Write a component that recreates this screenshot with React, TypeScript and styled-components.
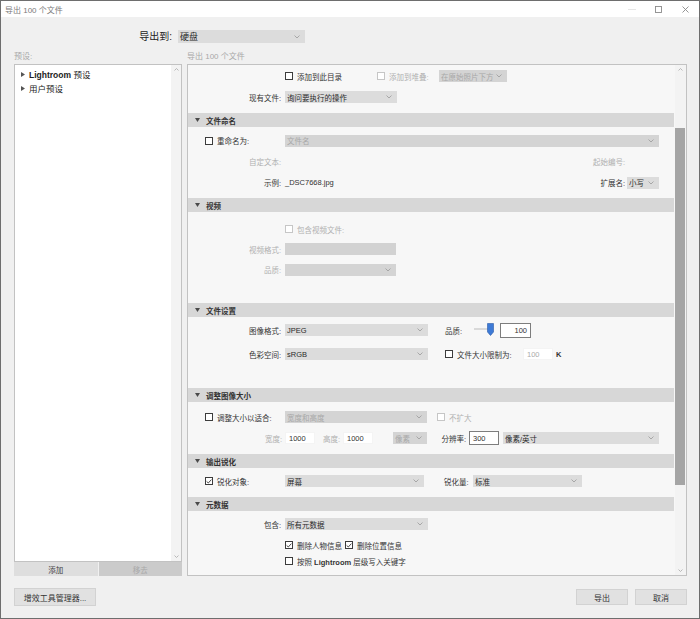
import React from "react";
import styled, { createGlobalStyle } from "styled-components";

const GlobalStyle = createGlobalStyle`
  html, body { margin: 0; padding: 0; background: #f0f0f0; }
  body { font-family: "Liberation Sans", "Noto Sans CJK SC", sans-serif; }
  * { box-sizing: border-box; }
`;

const Window = styled.div`
  width: 700px;
  height: 619px;
  border: 1px solid #6e6e6e;
  background: #f0f0f0;
  display: flex;
  flex-direction: column;
  font-size: 7.5px;
  color: #333;
  font-family: "Liberation Sans", "Noto Sans CJK SC", sans-serif;
  overflow: hidden;
`;

const TitleBar = styled.div`
  height: 16px;
  flex-shrink: 0;
  background: #fff;
  display: flex;
  align-items: center;
  padding-left: 4px;
  color: #7a7a7a;
  font-size: 8px;
`;

const WinControls = styled.div`
  margin-left: auto;
  display: flex;
  height: 100%;
`;

const WinBtn = styled.div`
  width: 27px;
  height: 100%;
  display: flex;
  align-items: center;
  justify-content: center;
`;

const Body = styled.div`
  flex: 1;
  display: flex;
  flex-direction: column;
  padding: 0 12px 0 13px;
`;

const DestRow = styled.div`
  height: 33px;
  padding-top: 13px;
  display: flex;
  align-items: flex-start;
  flex-shrink: 0;
`;

const DestLabel = styled.div`
  width: 158px;
  text-align: right;
  font-size: 10px;
  line-height: 13px;
  color: #222;
`;

const Main = styled.div`
  display: flex;
  gap: 5px;
  height: 526px;
  flex-shrink: 0;
`;

const Column = styled.div<{ $w: number }>`
  width: ${(p) => p.$w}px;
  display: flex;
  flex-direction: column;
  flex-shrink: 0;
`;

const ColHeading = styled.div`
  height: 14px;
  line-height: 14px;
  color: #a8a8a8;
  font-size: 8px;
`;

const ListBox = styled.div`
  height: 498px;
  border: 1px solid #c2c2c2;
  background: #fff;
  display: flex;
`;

const ListItems = styled.div`
  flex: 1;
  padding: 2px 0 0 6px;
`;

const TreeItem = styled.div`
  height: 14px;
  display: flex;
  align-items: center;
  gap: 4px;
  color: #222;
  font-size: 8.5px;
`;

const Latin = styled.span<{ $bold?: boolean }>`
  font-family: "Liberation Sans", sans-serif;
  font-weight: ${(p) => (p.$bold ? 700 : 400)};
`;

const ScrollBar = styled.div<{ $w: number }>`
  width: ${(p) => p.$w}px;
  background: #f3f3f3;
  display: flex;
  flex-direction: column;
  align-items: center;
  justify-content: space-between;
  padding: 3px 0 3px;
  flex-shrink: 0;
`;

const ScrollTrack = styled.div`
  flex: 1;
  width: 100%;
  padding: 57px 1px 84px 0;
  display: flex;
`;

const Thumb = styled.div`
  flex: 1;
  background: #a5a5a5;
`;

const ListButtons = styled.div`
  display: grid;
  grid-template-columns: 1fr 1fr;
  gap: 1px;
  height: 14px;
`;

const ListButton = styled.div<{ $dis?: boolean }>`
  background: ${(p) => (p.$dis ? "#cbcbcb" : "#dedede")};
  color: ${(p) => (p.$dis ? "#a9a9a9" : "#444")};
  display: flex;
  align-items: center;
  justify-content: center;
`;

const Panel = styled.div`
  height: 512px;
  border: 1px solid #c2c2c2;
  background: #f7f7f7;
  display: flex;
`;

const PanelContent = styled.div`
  flex: 1;
  overflow: hidden;
  display: flex;
  flex-direction: column;
`;

const SectionHeader = styled.div`
  height: 14px;
  flex-shrink: 0;
  background: #d7d7d7;
  display: flex;
  align-items: center;
  gap: 6px;
  padding-left: 7px;
  margin-right: 1px;
  font-weight: 700;
  color: #333;
`;

const SectionBody = styled.div<{ $h: number; $pt: number }>`
  height: ${(p) => p.$h}px;
  padding-top: ${(p) => p.$pt}px;
  flex-shrink: 0;
  overflow: hidden;
`;

const Row = styled.div<{ $h: number; $pl?: number; $pr?: number }>`
  height: ${(p) => p.$h}px;
  padding-left: ${(p) => p.$pl ?? 0}px;
  padding-right: ${(p) => p.$pr ?? 0}px;
  display: flex;
  align-items: center;
  white-space: nowrap;
`;

const Label = styled.div<{ $w: number; $dim?: boolean; $pr?: number }>`
  width: ${(p) => p.$w}px;
  padding-right: ${(p) => p.$pr ?? 0}px;
  flex-shrink: 0;
  text-align: right;
  color: ${(p) => (p.$dim ? "#b0b0b0" : "#333")};
`;

const Text = styled.span<{ $ml?: number; $dim?: boolean }>`
  margin-left: ${(p) => p.$ml ?? 0}px;
  color: ${(p) => (p.$dim ? "#b0b0b0" : "#333")};
`;

const Cell = styled.div<{ $w: number; $ml?: number }>`
  width: ${(p) => p.$w}px;
  margin-left: ${(p) => p.$ml ?? 0}px;
  flex-shrink: 0;
  display: flex;
  align-items: center;
`;

const Spacer = styled.div`
  flex: 1;
`;

const SelectBox = styled.div<{ $w: number; $ml?: number; $dis?: boolean; $h?: number; $fs?: number }>`
  width: ${(p) => p.$w}px;
  margin-left: ${(p) => p.$ml ?? 0}px;
  height: ${(p) => p.$h ?? 12}px;
  flex-shrink: 0;
  background: ${(p) => (p.$dis ? "#d4d4d4" : "#dcdcdc")};
  color: ${(p) => (p.$dis ? "#a8a8a8" : "#2a2a2a")};
  font-size: ${(p) => p.$fs ?? 7.5}px;
  display: flex;
  align-items: center;
  justify-content: space-between;
  padding: 0 5px 0 2px;
  white-space: nowrap;
  overflow: hidden;
`;

const Field = styled.div<{ $w: number; $ml?: number; $h?: number; $border?: boolean; $dis?: boolean; $right?: boolean }>`
  width: ${(p) => p.$w}px;
  margin-left: ${(p) => p.$ml ?? 0}px;
  height: ${(p) => p.$h ?? 12}px;
  flex-shrink: 0;
  background: #fff;
  border: 1px solid ${(p) => (p.$border ? "#7d7d7d" : "#f4f4f4")};
  color: ${(p) => (p.$dis ? "#aaaaaa" : "#333")};
  display: flex;
  align-items: center;
  justify-content: ${(p) => (p.$right ? "flex-end" : "flex-start")};
  padding: 0 3px;
`;

const BlankField = styled.div<{ $w: number; $ml?: number }>`
  width: ${(p) => p.$w}px;
  margin-left: ${(p) => p.$ml ?? 0}px;
  height: 12px;
  flex-shrink: 0;
  background: #d2d2d2;
`;

const CheckWrap = styled.span<{ $dis?: boolean }>`
  display: inline-flex;
  align-items: center;
  gap: 4px;
  color: ${(p) => (p.$dis ? "#b0b0b0" : "#333")};
  white-space: nowrap;
`;

const CheckBoxSq = styled.span<{ $dis?: boolean }>`
  width: 8px;
  height: 8px;
  flex-shrink: 0;
  border: 1px solid ${(p) => (p.$dis ? "#c6c6c6" : "#3c3c3c")};
  background: #fff;
  display: inline-flex;
  align-items: center;
  justify-content: center;
`;

const Footer = styled.div`
  flex: 1;
  display: flex;
  justify-content: space-between;
  align-items: flex-start;
  padding-top: 12px;
`;

const DlgButton = styled.div<{ $w: number; $h?: number }>`
  width: ${(p) => p.$w}px;
  height: ${(p) => p.$h ?? 16}px;
  background: #e1e1e1;
  border: 1px solid #d2d2d2;
  color: #333;
  display: flex;
  align-items: center;
  justify-content: center;
  font-size: 8px;
`;

const ButtonGroup = styled.div`
  display: flex;
  gap: 7px;
  padding-top: 1px;
`;

const Chevron = () => (
  <svg width="6" height="4" viewBox="0 0 6 4">
    <polyline points="0.5,0.5 3,3 5.5,0.5" fill="none" stroke="#a0a0a0" strokeWidth="0.9" />
  </svg>
);

const UpArrow = () => (
  <svg width="5" height="3" viewBox="0 0 5 3">
    <polyline points="0.5,2.5 2.5,0.5 4.5,2.5" fill="none" stroke="#a8a8a8" strokeWidth="0.8" />
  </svg>
);

const DownArrow = () => (
  <svg width="5" height="3" viewBox="0 0 5 3">
    <polyline points="0.5,0.5 2.5,2.5 4.5,0.5" fill="none" stroke="#a8a8a8" strokeWidth="0.8" />
  </svg>
);

const DownTri = () => (
  <svg width="5" height="4" viewBox="0 0 5 4">
    <polygon points="0,0 5,0 2.5,4" fill="#4a4a4a" />
  </svg>
);

const RightTri = () => (
  <svg width="4" height="5" viewBox="0 0 4 5">
    <polygon points="0,0 4,2.5 0,5" fill="#555" />
  </svg>
);

type SelectProps = { w: number; ml?: number; dis?: boolean; h?: number; fs?: number; children?: React.ReactNode };
const Select = ({ w, ml, dis, h, fs, children }: SelectProps) => (
  <SelectBox $w={w} $ml={ml} $dis={dis} $h={h} $fs={fs}>
    <span>{children}</span>
    <Chevron />
  </SelectBox>
);

type CheckProps = { checked?: boolean; dis?: boolean; children?: React.ReactNode };
const Check = ({ checked, dis, children }: CheckProps) => (
  <CheckWrap $dis={dis}>
    <CheckBoxSq $dis={dis}>
      {checked && (
        <svg width="6" height="5" viewBox="0 0 6 5">
          <polyline points="0.6,2.4 2.3,4 5.4,0.6" fill="none" stroke="#333" strokeWidth="0.9" />
        </svg>
      )}
    </CheckBoxSq>
    <span>{children}</span>
  </CheckWrap>
);

const Section = ({ title }: { title: string }) => (
  <SectionHeader>
    <DownTri />
    <span>{title}</span>
  </SectionHeader>
);

const QualitySlider = () => (
  <svg width="20" height="14" viewBox="0 0 20 14">
    <line x1="0" y1="6" x2="14" y2="6" stroke="#c4c4c4" strokeWidth="1.2" />
    <path d="M13.5,0.5 H19.5 V9 L16.5,12.5 L13.5,9 Z" fill="#3d7ad6" stroke="#2a5aa8" strokeWidth="0.6" />
  </svg>
);

export default function App() {
  return (
    <>
      <GlobalStyle />
      <Window>
        <TitleBar>
          <span>导出 100 个文件</span>
          <WinControls>
            <WinBtn>
              <svg width="8" height="1" viewBox="0 0 8 1">
                <line x1="0" y1="0.5" x2="8" y2="0.5" stroke="#e6e6e6" strokeWidth="1" />
              </svg>
            </WinBtn>
            <WinBtn>
              <svg width="7" height="7" viewBox="0 0 7 7">
                <rect x="0.5" y="0.5" width="6" height="6" fill="none" stroke="#8a8a8a" strokeWidth="0.9" />
              </svg>
            </WinBtn>
            <WinBtn>
              <svg width="7" height="7" viewBox="0 0 7 7">
                <path d="M0.5,0.5 L6.5,6.5 M6.5,0.5 L0.5,6.5" stroke="#8a8a8a" strokeWidth="0.9" />
              </svg>
            </WinBtn>
          </WinControls>
        </TitleBar>
        <Body>
          <DestRow>
            <DestLabel>导出到:</DestLabel>
            <Select w={127} ml={6} h={13} fs={9}>硬盘</Select>
          </DestRow>
          <Main>
            <Column $w={168}>
              <ColHeading>预设:</ColHeading>
              <ListBox>
                <ListItems>
                  <TreeItem>
                    <RightTri />
                    <span>
                      <Latin $bold>Lightroom</Latin> 预设
                    </span>
                  </TreeItem>
                  <TreeItem>
                    <RightTri />
                    <span>用户预设</span>
                  </TreeItem>
                </ListItems>
                <ScrollBar $w={10}>
                  <UpArrow />
                  <DownArrow />
                </ScrollBar>
              </ListBox>
              <ListButtons>
                <ListButton>添加</ListButton>
                <ListButton $dis>移去</ListButton>
              </ListButtons>
            </Column>
            <Column $w={500}>
              <ColHeading>导出 100 个文件</ColHeading>
              <Panel>
                <PanelContent>
                  <SectionBody $h={48} $pt={0}>
                    <Row $h={22} $pl={97}>
                      <Cell $w={92}>
                        <Check>添加到此目录</Check>
                      </Cell>
                      <Cell $w={62}>
                        <Check dis>添加到堆叠:</Check>
                      </Cell>
                      <Select w={68} dis>在原始照片下方</Select>
                    </Row>
                    <Row $h={20}>
                      <Label $w={93}>现有文件:</Label>
                      <Select w={112} ml={4}>询问要执行的操作</Select>
                    </Row>
                  </SectionBody>

                  <Section title="文件命名" />
                  <SectionBody $h={71} $pt={3}>
                    <Row $h={21} $pl={17}>
                      <Cell $w={80}>
                        <Check>重命名为:</Check>
                      </Cell>
                      <Select w={374} dis>文件名</Select>
                    </Row>
                    <Row $h={21} $pr={50}>
                      <Label $w={93} $dim>自定文本:</Label>
                      <Spacer />
                      <Text $dim>起始编号:</Text>
                    </Row>
                    <Row $h={21} $pr={16}>
                      <Label $w={93}>示例:</Label>
                      <Text $ml={4}>
                        <Latin>_DSC7668.jpg</Latin>
                      </Text>
                      <Spacer />
                      <Text>扩展名:</Text>
                      <Select w={32} ml={2}>小写</Select>
                    </Row>
                  </SectionBody>

                  <Section title="视频" />
                  <SectionBody $h={91} $pt={7}>
                    <Row $h={20} $pl={97}>
                      <Check dis>包含视频文件:</Check>
                    </Row>
                    <Row $h={20}>
                      <Label $w={93} $dim>视频格式:</Label>
                      <BlankField $w={111} $ml={4} />
                    </Row>
                    <Row $h={21}>
                      <Label $w={93} $dim>品质:</Label>
                      <Select w={111} ml={4} dis />
                    </Row>
                  </SectionBody>

                  <Section title="文件设置" />
                  <SectionBody $h={71} $pt={1}>
                    <Row $h={24}>
                      <Label $w={93}>图像格式:</Label>
                      <Select w={143} ml={4}>
                        <Latin>JPEG</Latin>
                      </Select>
                      <Cell $w={29} $ml={17}>
                        <Text>品质:</Text>
                      </Cell>
                      <QualitySlider />
                      <Field $w={31} $ml={6} $h={15} $border $right>
                        100
                      </Field>
                    </Row>
                    <Row $h={24}>
                      <Label $w={93}>色彩空间:</Label>
                      <Select w={143} ml={4}>
                        <Latin>sRGB</Latin>
                      </Select>
                      <Cell $w={78} $ml={17}>
                        <Check>文件大小限制为:</Check>
                      </Cell>
                      <Field $w={30} $dis>
                        100
                      </Field>
                      <Text $ml={3}>
                        <Latin $bold>K</Latin>
                      </Text>
                    </Row>
                  </SectionBody>

                  <Section title="调整图像大小" />
                  <SectionBody $h={52} $pt={4}>
                    <Row $h={22} $pl={17}>
                      <Cell $w={80}>
                        <Check>调整大小以适合:</Check>
                      </Cell>
                      <Select w={142} dis>宽度和高度</Select>
                      <Cell $w={40} $ml={10}>
                        <Check dis>不扩大</Check>
                      </Cell>
                    </Row>
                    <Row $h={20}>
                      <Label $w={94} $dim>宽度:</Label>
                      <Field $w={30} $ml={3}>1000</Field>
                      <Label $w={28} $pr={3} $dim>高度:</Label>
                      <Field $w={30}>1000</Field>
                      <Select w={34} ml={20} dis>像素</Select>
                      <Label $w={42} $pr={3}>分辨率:</Label>
                      <Field $w={30} $h={14} $border>
                        300
                      </Field>
                      <Select w={156} ml={4}>像素/英寸</Select>
                    </Row>
                  </SectionBody>

                  <Section title="输出锐化" />
                  <SectionBody $h={29} $pt={2}>
                    <Row $h={22} $pl={17}>
                      <Cell $w={80}>
                        <Check checked>锐化对象:</Check>
                      </Cell>
                      <Select w={139}>屏幕</Select>
                      <Cell $w={29} $ml={20}>
                        <Text>锐化量:</Text>
                      </Cell>
                      <Select w={109}>标准</Select>
                    </Row>
                  </SectionBody>

                  <Section title="元数据" />
                  <SectionBody $h={80} $pt={2}>
                    <Row $h={22}>
                      <Label $w={93}>包含:</Label>
                      <Select w={143} ml={4}>所有元数据</Select>
                    </Row>
                    <Row $h={20} $pl={97}>
                      <Cell $w={60}>
                        <Check checked>删除人物信息</Check>
                      </Cell>
                      <Check checked>删除位置信息</Check>
                    </Row>
                    <Row $h={12} $pl={97}>
                      <Check>
                        按照 <Latin $bold>Lightroom</Latin> 层级写入关键字
                      </Check>
                    </Row>
                  </SectionBody>
                </PanelContent>
                <ScrollBar $w={11}>
                  <UpArrow />
                  <ScrollTrack>
                    <Thumb />
                  </ScrollTrack>
                  <DownArrow />
                </ScrollBar>
              </Panel>
            </Column>
          </Main>
          <Footer>
            <DlgButton $w={82} $h={18}>
              增效工具管理器...
            </DlgButton>
            <ButtonGroup>
              <DlgButton $w={52}>导出</DlgButton>
              <DlgButton $w={52}>取消</DlgButton>
            </ButtonGroup>
          </Footer>
        </Body>
      </Window>
    </>
  );
}
